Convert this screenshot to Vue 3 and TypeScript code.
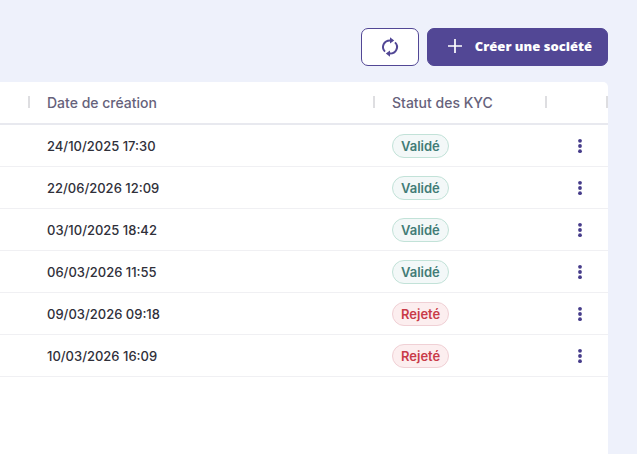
<script setup lang="ts">
interface Company {
  createdAt: string
  status: 'Validé' | 'Rejeté'
}

const companies: Company[] = [
  { createdAt: '24/10/2025 17:30', status: 'Validé' },
  { createdAt: '22/06/2026 12:09', status: 'Validé' },
  { createdAt: '03/10/2025 18:42', status: 'Validé' },
  { createdAt: '06/03/2026 11:55', status: 'Validé' },
  { createdAt: '09/03/2026 09:18', status: 'Rejeté' },
  { createdAt: '10/03/2026 16:09', status: 'Rejeté' },
]
</script>

<template>
  <main class="page">
    <div class="toolbar">
      <button class="btn refresh" type="button" aria-label="Actualiser">
        <svg width="20" height="22" viewBox="0 0 20 22" fill="none" stroke="currentColor" stroke-width="2">
          <path d="M10 4.400A7 6.600 0 0 0 5 15.600" />
          <path d="M10 17.600A7 6.600 0 0 0 15 6.400" />
          <path d="M10 1.200l4.200 3.200-4.200 3.200zM10 20.800l-4.200-3.200 4.200-3.200z" fill="currentColor" stroke="none" />
        </svg>
      </button>
      <button class="btn create" type="button">
        <svg width="16" height="16" viewBox="0 0 16 16" fill="none" stroke="currentColor" stroke-width="1.700" aria-hidden="true">
          <path d="M8 1v14M1 8h14" />
        </svg>
        <span>Créer une société</span>
      </button>
    </div>

    <section class="card">
      <table class="grid">
        <colgroup>
          <col class="col-edge" />
          <col />
          <col class="col-status" />
          <col class="col-menu" />
        </colgroup>
        <thead>
          <tr>
            <th></th>
            <th scope="col">Date de création</th>
            <th scope="col">Statut des KYC</th>
            <th></th>
          </tr>
        </thead>
        <tbody>
          <tr v-for="company in companies" :key="company.createdAt">
            <td></td>
            <td>{{ company.createdAt }}</td>
            <td>
              <span class="chip" :class="company.status === 'Validé' ? 'valid' : 'rejected'">{{ company.status }}</span>
            </td>
            <td class="menu-cell">
              <button class="menu" type="button" aria-label="Actions">
                <svg width="6" height="16" viewBox="0 0 6 16" fill="currentColor">
                  <circle cx="3" cy="2.800" r="1.900" />
                  <circle cx="3" cy="8" r="1.900" />
                  <circle cx="3" cy="13.200" r="1.900" />
                </svg>
              </button>
            </td>
          </tr>
        </tbody>
      </table>
    </section>
  </main>
</template>

<style>
body {
  margin: 0;
  background: #eef1fb;
}
</style>

<style scoped>
.page {
  box-sizing: border-box;
  display: flex;
  flex-direction: column;
  gap: 16px;
  min-height: 100vh;
  padding: 28px 29px 0 0;
  background: #eef1fb;
  font-family: Inter, "Liberation Sans", sans-serif;
}

.toolbar {
  display: flex;
  justify-content: flex-end;
  gap: 8px;
}

.btn {
  display: flex;
  align-items: center;
  justify-content: center;
  height: 38px;
  border: 1px solid #524795;
  border-radius: 7px;
  cursor: pointer;
}

.refresh {
  width: 58px;
  padding: 0;
  background: #fff;
  color: #524795;
}

.create {
  gap: 12px;
  padding: 0 15px 2px 19px;
  background: #524795;
  color: #fff;
  font: 800 13px/18px "Open Sans", sans-serif;
}

.card {
  flex: 1;
  overflow: hidden;
  border-radius: 0 5px 0 0;
  background: #fff;
}

.grid {
  width: 100%;
  table-layout: fixed;
  border-collapse: separate;
  border-spacing: 0;
}

.col-edge {
  width: 30px;
}

.col-status {
  width: 172px;
}

.col-menu {
  width: 61px;
}

th {
  height: 41px;
  padding: 0 0 0 17px;
  border-bottom: 2px solid #e8e9ef;
  background: linear-gradient(#dedee1, #dedee1) right 14px / 2px 12px no-repeat;
  color: #66627b;
  font-size: 14px;
  font-weight: 500;
  text-align: left;
}

td {
  height: 41px;
  padding: 0 0 0 17px;
  border-bottom: 1px solid #f0f0f3;
  color: #30303a;
  font-size: 13px;
  font-weight: 500;
}

th:first-child,
td:first-child {
  padding: 0;
}

.chip {
  display: inline-flex;
  align-items: center;
  box-sizing: border-box;
  height: 24px;
  padding: 0 8px;
  border: 1px solid;
  border-radius: 12px;
  font-size: 13px;
  font-weight: 600;
  vertical-align: middle;
}

.valid {
  border-color: #c2e2d8;
  background: #f3f8f8;
  color: #427c76;
}

.rejected {
  border-color: #f0d0d5;
  background: #fceeef;
  color: #c93b48;
}

.menu-cell {
  padding: 0 0 0 23px;
}

.menu {
  display: flex;
  align-items: center;
  justify-content: center;
  width: 20px;
  height: 24px;
  padding: 0;
  border: 0;
  background: none;
  color: #463c8a;
  cursor: pointer;
}
</style>
